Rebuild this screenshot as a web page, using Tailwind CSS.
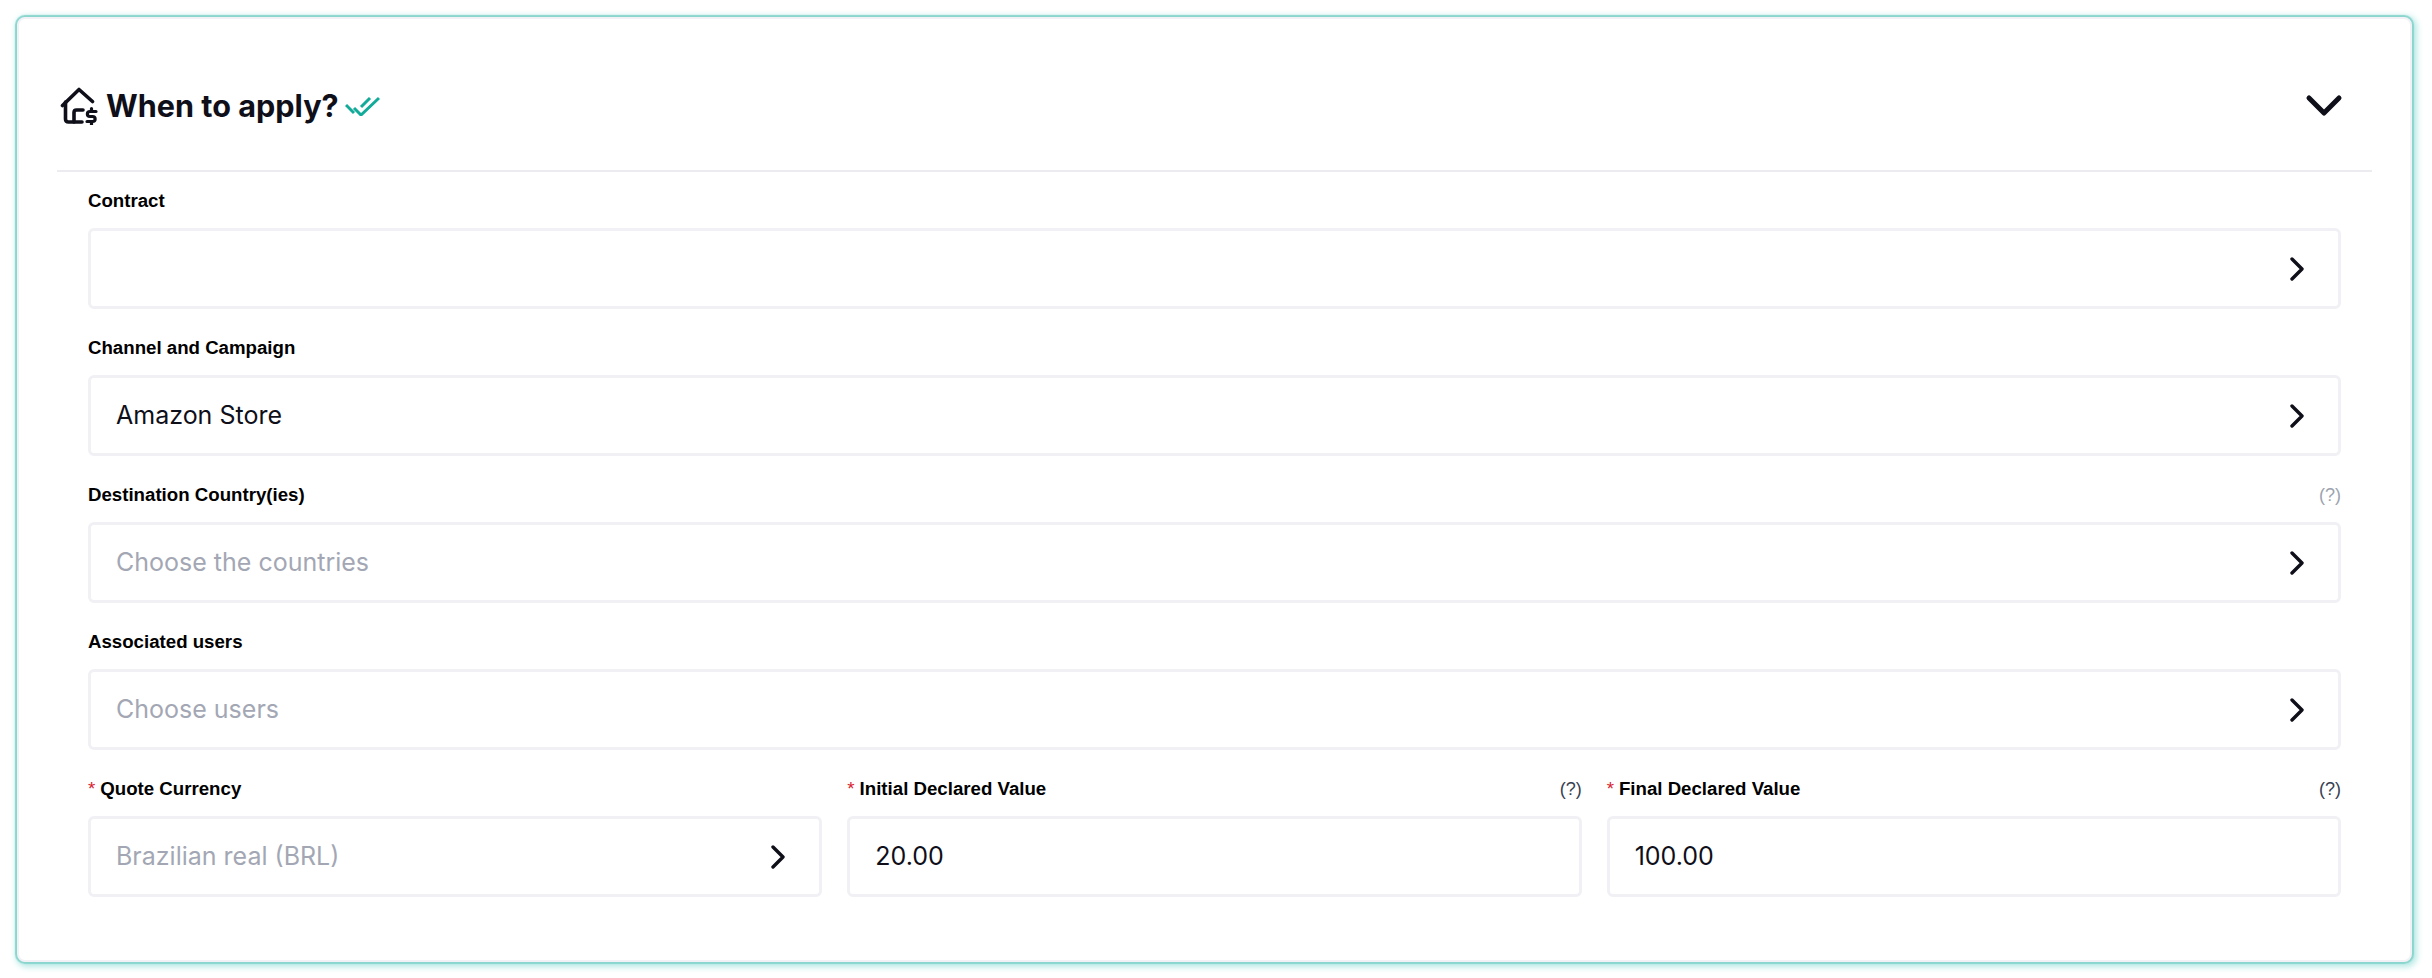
<!DOCTYPE html>
<html lang="en">
<head>
  <meta charset="UTF-8">
  <title>When to apply?</title>
  <script src="https://cdn.jsdelivr.net/npm/@tailwindcss/browser@4"></script>
</head>
<body class="bg-white font-['Inter',sans-serif] text-[#0f0f1a]">
  <div class="pt-[17px] pl-[17px] w-[2432px] h-[978px] overflow-hidden">
    <section class="w-[2395px] h-[945px] rounded-[8px] border-[2px] border-[#f2f2f6] bg-white shadow-[0_0_1px_2px_#8ad6cf,2px_2px_6px_3px_#b5e9e4] pl-[38px] pr-[38px]">
      <!-- header -->
      <div class="flex items-center h-[153px] pt-[22px] border-b-[2px] border-[#ececf0]">
        <svg class="ml-[3px] w-[38px] h-[38px]" viewBox="0 0 38 38" fill="none" stroke="#0f0f1a" stroke-width="3.600" stroke-linecap="round" stroke-linejoin="round">
          <path d="M2.500 18.500L19 2.500L32.500 14.500"/>
          <path d="M5.500 15V32C5.500 34 6.500 35 8.500 35H22"/>
          <path d="M23 23H16.500C15 23 14 24 14 25.500V35"/>
          <path d="M36 24.500H30C26.500 24.500 26.500 29.500 30 29.500H32.500C36 29.500 36 34.500 32.500 34.500H27" stroke-width="3.200"/>
          <path d="M31.500 21.500V24M31.500 35V37.500" stroke-width="3.200"/>
        </svg>
        <h2 class="ml-[8px] pt-[2px] text-[30.6px] font-bold leading-none">When to apply?</h2>
        <svg class="ml-[6px] w-[35px] h-[20px]" viewBox="0 0 35 20" fill="none" stroke="#12ab9a" stroke-width="3">
          <path d="M1 9L9 17"/>
          <path d="M9 12L16 19L34 2"/>
          <path d="M16 11L25 2"/>
        </svg>
        <svg class="ml-auto mr-[29px] w-[38px] h-[24px]" viewBox="0 0 38 24" fill="none" stroke="#0f0f1a" stroke-width="5" stroke-linecap="round" stroke-linejoin="round">
          <path d="M4 4L19 19L34 4"/>
        </svg>
      </div>

      <!-- form -->
      <div class="px-[31px] flex flex-col gap-[10px] font-['Inter',sans-serif]">
        <div>
          <label class="flex items-center h-[56px] pt-[2px] font-['Liberation_Sans',sans-serif] text-[18.67px] font-bold text-black">Contract</label>
          <div class="flex items-center h-[81px] rounded-[6px] border-[3px] border-[#f0f0f5] pl-[25px] pr-[33px]">
            <svg class="ml-auto w-[16px] h-[24px]" viewBox="0 0 16 24" fill="none" stroke="#0f0f1a" stroke-width="3.400" stroke-linecap="round" stroke-linejoin="round"><path d="M3 2L13 12L3 22"/></svg>
          </div>
        </div>
        <div>
          <label class="flex items-center h-[56px] pt-[2px] font-['Liberation_Sans',sans-serif] text-[18.67px] font-bold text-black">Channel and Campaign</label>
          <div class="flex items-center h-[81px] rounded-[6px] border-[3px] border-[#f0f0f5] pl-[25px] pr-[33px] text-[25px]">
            <span>Amazon Store</span>
            <svg class="ml-auto w-[16px] h-[24px]" viewBox="0 0 16 24" fill="none" stroke="#0f0f1a" stroke-width="3.400" stroke-linecap="round" stroke-linejoin="round"><path d="M3 2L13 12L3 22"/></svg>
          </div>
        </div>
        <div>
          <label class="flex items-center justify-between h-[56px] pt-[2px] font-['Liberation_Sans',sans-serif] text-[18.67px] font-bold text-black">
            <span>Destination Country(ies)</span>
            <span class="text-[18px] font-normal text-[#9ca3af]">(?)</span>
          </label>
          <div class="flex items-center h-[81px] rounded-[6px] border-[3px] border-[#f0f0f5] pl-[25px] pr-[33px] text-[25px] text-[#a3a7b4]">
            <span>Choose the countries</span>
            <svg class="ml-auto w-[16px] h-[24px]" viewBox="0 0 16 24" fill="none" stroke="#0f0f1a" stroke-width="3.400" stroke-linecap="round" stroke-linejoin="round"><path d="M3 2L13 12L3 22"/></svg>
          </div>
        </div>
        <div>
          <label class="flex items-center h-[56px] pt-[2px] font-['Liberation_Sans',sans-serif] text-[18.67px] font-bold text-black">Associated users</label>
          <div class="flex items-center h-[81px] rounded-[6px] border-[3px] border-[#f0f0f5] pl-[25px] pr-[33px] text-[25px] text-[#a3a7b4]">
            <span>Choose users</span>
            <svg class="ml-auto w-[16px] h-[24px]" viewBox="0 0 16 24" fill="none" stroke="#0f0f1a" stroke-width="3.400" stroke-linecap="round" stroke-linejoin="round"><path d="M3 2L13 12L3 22"/></svg>
          </div>
        </div>
        <div class="grid grid-cols-3 gap-[25px]">
          <div>
            <label class="flex items-center h-[56px] pt-[2px] font-['Liberation_Sans',sans-serif] text-[18.67px] font-bold text-black">
              <span class="text-[#d8232f] font-normal mr-[5px]">*</span>Quote Currency
            </label>
            <div class="flex items-center h-[81px] rounded-[6px] border-[3px] border-[#f0f0f5] pl-[25px] pr-[33px] text-[25px] text-[#a3a7b4]">
              <span>Brazilian real (BRL)</span>
              <svg class="ml-auto w-[16px] h-[24px]" viewBox="0 0 16 24" fill="none" stroke="#0f0f1a" stroke-width="3.400" stroke-linecap="round" stroke-linejoin="round"><path d="M3 2L13 12L3 22"/></svg>
            </div>
          </div>
          <div>
            <label class="flex items-center justify-between h-[56px] pt-[2px] font-['Liberation_Sans',sans-serif] text-[18.67px] font-bold text-black">
              <span><span class="text-[#d8232f] font-normal mr-[5px]">*</span>Initial Declared Value</span>
              <span class="text-[18px] font-normal text-[#374151]">(?)</span>
            </label>
            <div class="flex items-center h-[81px] rounded-[6px] border-[3px] border-[#f0f0f5] pl-[25px] pr-[33px] text-[25px]">20.00</div>
          </div>
          <div>
            <label class="flex items-center justify-between h-[56px] pt-[2px] font-['Liberation_Sans',sans-serif] text-[18.67px] font-bold text-black">
              <span><span class="text-[#d8232f] font-normal mr-[5px]">*</span>Final Declared Value</span>
              <span class="text-[18px] font-normal text-[#374151]">(?)</span>
            </label>
            <div class="flex items-center h-[81px] rounded-[6px] border-[3px] border-[#f0f0f5] pl-[25px] pr-[33px] text-[25px]">100.00</div>
          </div>
        </div>
      </div>
    </section>
  </div>
</body>
</html>
